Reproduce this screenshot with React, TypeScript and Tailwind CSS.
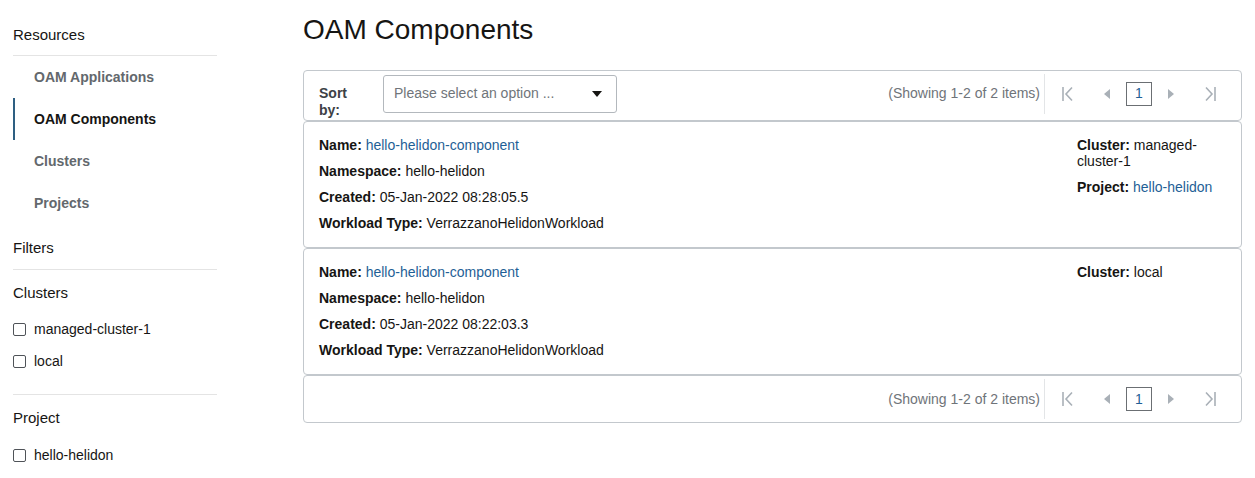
import React from 'react'

const font = { fontFamily: '"Liberation Sans", Arial, sans-serif' }

const navItems = ['OAM Applications', 'OAM Components', 'Clusters', 'Projects']

const items = [
  {
    name: 'hello-helidon-component',
    namespace: 'hello-helidon',
    created: '05-Jan-2022 08:28:05.5',
    workload: 'VerrazzanoHelidonWorkload',
    cluster: 'managed-cluster-1',
    project: 'hello-helidon',
  },
  {
    name: 'hello-helidon-component',
    namespace: 'hello-helidon',
    created: '05-Jan-2022 08:22:03.3',
    workload: 'VerrazzanoHelidonWorkload',
    cluster: 'local',
    project: null as string | null,
  },
]

function FirstIcon() {
  return (
    <svg width="14" height="16" viewBox="0 0 14 16" fill="none" stroke="#a9b0b7" strokeWidth="1.6">
      <line x1="2" y1="1" x2="2" y2="15" />
      <polyline points="11,1.5 5,8 11,14.5" />
    </svg>
  )
}

function LastIcon() {
  return (
    <svg width="14" height="16" viewBox="0 0 14 16" fill="none" stroke="#a9b0b7" strokeWidth="1.6">
      <line x1="12" y1="1" x2="12" y2="15" />
      <polyline points="3,1.5 9,8 3,14.5" />
    </svg>
  )
}

function PrevIcon() {
  return (
    <svg width="6" height="10" viewBox="0 0 6 10">
      <polygon points="6,0 0,5 6,10" fill="#a9b0b7" />
    </svg>
  )
}

function NextIcon() {
  return (
    <svg width="6" height="10" viewBox="0 0 6 10">
      <polygon points="0,0 6,5 0,10" fill="#a9b0b7" />
    </svg>
  )
}

function Pager() {
  return (
    <div className="flex items-center ml-auto">
      <span className="text-[14px] text-[#6f7479] mr-[4px]">(Showing 1-2 of 2 items)</span>
      <div className="w-px h-[40px] bg-[#e3e5e7]" />
      <div className="flex items-center ml-[2px] pr-[12px]">
        <div className="w-[41px] flex justify-center"><FirstIcon /></div>
        <div className="w-[38px] flex justify-center"><PrevIcon /></div>
        <div className="w-[26px] h-[24px] border border-[#6b6f73] flex items-center justify-center text-[14px] text-[#1f5f96]">1</div>
        <div className="w-[38px] flex justify-center"><NextIcon /></div>
        <div className="w-[39px] flex justify-center"><LastIcon /></div>
      </div>
    </div>
  )
}

function Checkbox({ label }: { label: string }) {
  return (
    <div className="flex items-center h-[32px]">
      <span className="w-[13px] h-[13px] border border-[#4f5358] rounded-[2px] bg-white" />
      <span className="ml-[8px] text-[14px] text-[#161513]">{label}</span>
    </div>
  )
}

export default function App() {
  return (
    <div className="min-h-screen bg-white flex text-[#161513]" style={font}>
      {/* Sidebar */}
      <aside className="w-[204px] ml-[13px] shrink-0">
        <div className="pt-[25px] pb-[10px] text-[15px] leading-[20px]">Resources</div>
        <div className="h-px bg-[#e4e4e4]" />
        <nav>
          {navItems.map((n) => {
            const active = n === 'OAM Components'
            return (
              <div
                key={n}
                className={`h-[42px] flex items-center pl-[19px] text-[14px] font-bold border-l-2 ${
                  active ? 'border-[#2e5f82] text-[#161513]' : 'border-transparent text-[#63686d]'
                }`}
              >
                {n}
              </div>
            )
          })}
        </nav>
        <div className="mt-[14px] mb-[11px] text-[15px] leading-[20px]">Filters</div>
        <div className="h-px bg-[#e4e4e4]" />
        <div className="mt-[13px] mb-[10px] text-[15px] leading-[20px]">Clusters</div>
        <Checkbox label="managed-cluster-1" />
        <Checkbox label="local" />
        <div className="h-px bg-[#e4e4e4] mt-[17px]" />
        <div className="mt-[13px] mb-[11px] text-[15px] leading-[20px]">Project</div>
        <Checkbox label="hello-helidon" />
      </aside>

      {/* Main */}
      <main className="ml-[86px] w-[939px]">
        <h1 className="mt-[14px] text-[28px] leading-[32px] font-normal">OAM Components</h1>

        <div className="mt-[24px]">
          {/* Toolbar */}
          <div className="h-[51px] border border-[#c3c8cd] rounded-[4px] flex items-center pl-[15px] pb-[4px]">
            <div className="w-[40px] mt-[16px] text-[14px] leading-[17px] font-bold text-[#3d4146]">Sort by:</div>
            <div className="ml-[24px] w-[234px] h-[38px] border border-[#b3b8bd] rounded-[3px] flex items-center pl-[10px] pr-[14px]">
              <span className="text-[14px] text-[#70757a]">Please select an option ...</span>
              <svg className="ml-auto" width="10" height="6" viewBox="0 0 10 6">
                <polygon points="0,0 10,0 5,6" fill="#161513" />
              </svg>
            </div>
            <Pager />
          </div>

          {/* Items */}
          {items.map((it, i) => (
            <div
              key={i}
              className="border border-[#c3c8cd] rounded-[4px] flex pl-[15px] pr-[14px] pt-[10px] pb-[11px] text-[14px]"
            >
              <div className="flex-1 leading-[26px]">
                <div>
                  <b>Name:</b> <span className="text-[#1f5f96]">{it.name}</span>
                </div>
                <div>
                  <b>Namespace:</b> {it.namespace}
                </div>
                <div>
                  <b>Created:</b> {it.created}
                </div>
                <div>
                  <b>Workload Type:</b> {it.workload}
                </div>
              </div>
              <div className="w-[150px] pt-[5px] leading-[16px]">
                <div className="mb-[10px]">
                  <b>Cluster:</b> {it.cluster}
                </div>
                {it.project && (
                  <div>
                    <b>Project:</b> <span className="text-[#1f5f96]">{it.project}</span>
                  </div>
                )}
              </div>
            </div>
          ))}

          {/* Footer */}
          <div className="h-[48px] border border-[#c3c8cd] rounded-[4px] flex items-center">
            <Pager />
          </div>
        </div>
      </main>
    </div>
  )
}
